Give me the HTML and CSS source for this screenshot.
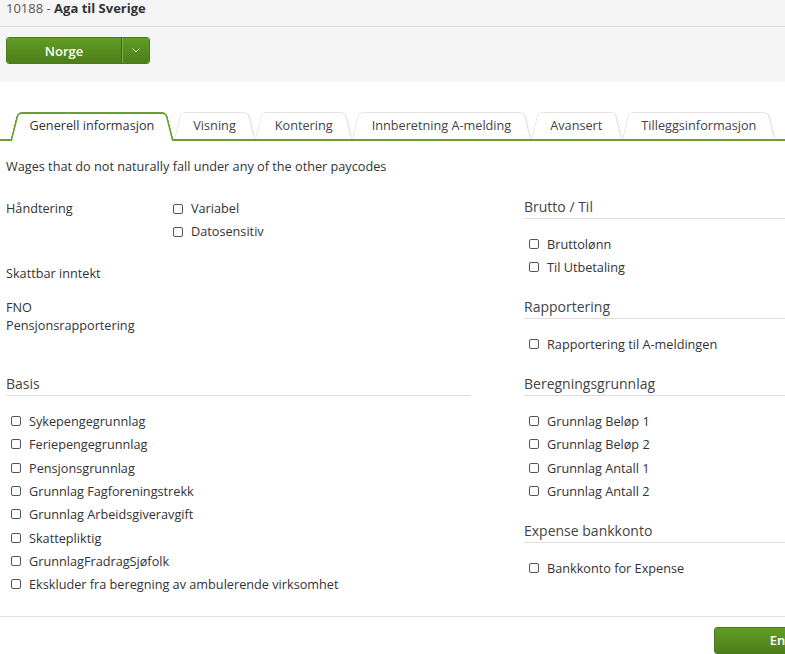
FILE: index.html
```html
<!DOCTYPE html>
<html lang="no">
<head>
    <meta charset="UTF-8">
    <meta name="viewport" content="width=device-width, initial-scale=1.0">
    <title>10188 - Aga til Sverige</title>
    <link rel="stylesheet" href="styles.css">
</head>
<body>

    <!-- Topp -->
    <div class="topbar">
        <div class="title">10188 - <b>Aga til Sverige</b></div>
        <div class="toolbar">
            <div class="split-btn">
                <button class="btn-main">Norge</button>
                <button class="btn-toggle">
                    <svg width="8" height="5" viewBox="0 0 8 5"><path d="M0.5 0.5l3.5 3.5 3.5-3.5" fill="none" stroke="#dbe6cf" stroke-width="1"/></svg>
                </button>
            </div>
        </div>
    </div>

    <div class="page">

        <!-- Faner -->
        <ul class="tabs">
            <li class="tab active">Generell informasjon</li>
            <li class="tab">Visning</li>
            <li class="tab">Kontering</li>
            <li class="tab">Innberetning A-melding</li>
            <li class="tab">Avansert</li>
            <li class="tab">Tilleggsinformasjon</li>
        </ul>

        <p class="description">Wages that do not naturally fall under any of the other paycodes</p>

        <div class="columns">

            <div class="col">
                <div class="field">
                    <div class="field-label">Håndtering</div>
                    <div class="checklist">
                        <label class="check"><input type="checkbox"> Variabel</label>
                        <label class="check"><input type="checkbox"> Datosensitiv</label>
                    </div>
                </div>
                <div class="field">
                    <div class="field-label">Skattbar inntekt</div>
                </div>
                <div class="field field-multiline">
                    <div class="field-label">FNO<br>Pensjonsrapportering</div>
                </div>
            </div>

            <div class="col">
                <div class="section">
                    <h2 class="section-title">Brutto / Til</h2>
                    <div class="checklist">
                        <label class="check"><input type="checkbox"> Bruttolønn</label>
                        <label class="check"><input type="checkbox"> Til Utbetaling</label>
                    </div>
                </div>
                <div class="section">
                    <h2 class="section-title">Rapportering</h2>
                    <div class="checklist">
                        <label class="check"><input type="checkbox"> Rapportering til A-meldingen</label>
                    </div>
                </div>
            </div>

            <div class="col">
                <div class="section">
                    <h2 class="section-title">Basis</h2>
                    <div class="checklist">
                        <label class="check"><input type="checkbox"> Sykepengegrunnlag</label>
                        <label class="check"><input type="checkbox"> Feriepengegrunnlag</label>
                        <label class="check"><input type="checkbox"> Pensjonsgrunnlag</label>
                        <label class="check"><input type="checkbox"> Grunnlag Fagforeningstrekk</label>
                        <label class="check"><input type="checkbox"> Grunnlag Arbeidsgiveravgift</label>
                        <label class="check"><input type="checkbox"> Skattepliktig</label>
                        <label class="check"><input type="checkbox"> GrunnlagFradragSjøfolk</label>
                        <label class="check"><input type="checkbox"> Ekskluder fra beregning av ambulerende virksomhet</label>
                    </div>
                </div>
            </div>

            <div class="col">
                <div class="section">
                    <h2 class="section-title">Beregningsgrunnlag</h2>
                    <div class="checklist">
                        <label class="check"><input type="checkbox"> Grunnlag Beløp 1</label>
                        <label class="check"><input type="checkbox"> Grunnlag Beløp 2</label>
                        <label class="check"><input type="checkbox"> Grunnlag Antall 1</label>
                        <label class="check"><input type="checkbox"> Grunnlag Antall 2</label>
                    </div>
                </div>
                <div class="section">
                    <h2 class="section-title">Expense bankkonto</h2>
                    <div class="checklist">
                        <label class="check"><input type="checkbox"> Bankkonto for Expense</label>
                    </div>
                </div>
            </div>

        </div>

        <div class="footer">
            <button class="btn">Endre</button>
        </div>

    </div>

</body>
</html>
```

FILE: styles.css
```css
html, body {
    overflow: hidden;
}
body {
    margin: 0;
    font-family: "Open Sans", Arial, sans-serif;
    font-size: 12.7px;
    color: #333;
    background-color: #fff;
}

/* Topp */
.topbar {
    width: 868px;
    background-color: #f5f5f5;
}
.title {
    height: 26px;
    padding: 0 6px;
    line-height: 16px;
    font-size: 13px;
    color: #555;
    border-bottom: 1px solid #dedede;
}
.title b {
    color: #333;
}
.toolbar {
    padding: 10px 6px 18px;
}
.split-btn {
    display: inline-flex;
    height: 27px;
    border-radius: 3px;
    overflow: hidden;
    border: 1px solid #4a7a19;
    box-sizing: border-box;
}
.split-btn button {
    border: none;
    margin: 0;
    padding: 0;
    color: #fff;
    font-family: inherit;
    cursor: pointer;
    background: linear-gradient(#619d25, #4d7e1a);
}
.btn-main {
    width: 115px;
    font-size: 13px;
    font-weight: 600;
    border-right: 1px solid #3f6a13 !important;
}
.btn-toggle {
    width: 27px;
    display: flex;
    align-items: center;
    justify-content: center;
    border-left: 1px solid #7cad4a !important;
}

/* Innhold */
.page {
    width: 868px;
}

/* Faner */
.tabs {
    list-style: none;
    display: flex;
    margin: 30px 0 0;
    padding: 0 0 0 10px;
    border-bottom: 2px solid #6c9d2e;
}
.tab {
    position: relative;
    z-index: 1;
    height: 27px;
    padding: 0 19.5px;
    line-height: 27px;
    color: #444;
    cursor: pointer;
}
.tab::before,
.tab::after {
    content: "";
    position: absolute;
    top: 0;
    bottom: 0;
    width: 60%;
    z-index: -1;
    background-color: #fff;
    border-top: 1px solid #e4e4e4;
}
.tab::before {
    left: 0;
    border-left: 1px solid #e4e4e4;
    border-top-left-radius: 5px;
    transform: skewX(-14deg);
    transform-origin: bottom left;
}
.tab::after {
    right: 0;
    border-right: 1px solid #dcdcdc;
    border-top-right-radius: 5px;
    transform: skewX(14deg);
    transform-origin: bottom right;
    box-shadow: 2px 0 2px -1px rgba(0, 0, 0, 0.06);
}
.tab.active {
    z-index: 2;
    color: #333;
}
.tab.active::before,
.tab.active::after {
    bottom: -2px;
    border-color: #6c9d2e;
    border-top-width: 2px;
    box-shadow: none;
}
.tab.active::before {
    border-left-width: 2px;
}
.tab.active::after {
    border-right-width: 2px;
}

.description {
    margin: 16px 6px 22px;
    line-height: 18px;
}

.columns {
    display: grid;
    grid-template-columns: 464px 1fr;
    column-gap: 54px;
    row-gap: 18px;
    padding: 0 6px;
    align-items: start;
}

/* Felter */
.field {
    display: grid;
    grid-template-columns: 162px 1fr;
    line-height: 23px;
}
.field + .field {
    margin-top: 18.5px;
}
.field + .field-multiline {
    margin-top: 12.5px;
    line-height: 18px;
}

.section + .section {
    margin-top: 18px;
}
.section-title {
    margin: 0 0 13.5px;
    padding-bottom: 2px;
    font-size: 14px;
    font-weight: normal;
    line-height: 19px;
    color: #444;
    border-bottom: 1px solid #dddddd;
}

.checklist {
    padding-left: 5px;
}
.check {
    display: flex;
    align-items: center;
    height: 23.3px;
    white-space: nowrap;
}
.check input {
    appearance: none;
    box-sizing: border-box;
    width: 10px;
    height: 10px;
    margin: 0 8px 0 0;
    border: 1px solid #555;
    border-radius: 2px;
    background-color: #fff;
}

/* Bunn */
.footer {
    display: flex;
    justify-content: flex-end;
    margin-top: 20px;
    padding: 10px 6px;
    border-top: 1px solid #e3e3e3;
}
.btn {
    width: 148px;
    height: 27px;
    border: 1px solid #4a7a19;
    border-radius: 3px;
    background: linear-gradient(#619d25, #4d7e1a);
    color: #fff;
    font-family: inherit;
    font-size: 13px;
    font-weight: 600;
    cursor: pointer;
}
```
